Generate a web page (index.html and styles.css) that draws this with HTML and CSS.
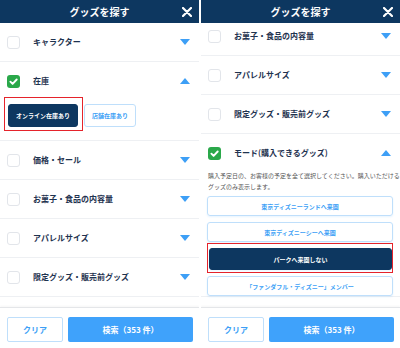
FILE: index.html
```html
<!DOCTYPE html>
<html lang="ja">
<head>
    <meta charset="UTF-8">
    <meta name="viewport" content="width=device-width, initial-scale=1.0">
    <title>グッズを探す</title>
    <link rel="stylesheet" href="styles.css">
</head>
<body>
    <div class="screens">
        <!-- 左：在庫を開いた状態 -->
        <section class="panel">
            <header class="bar">
                <h1>グッズを探す</h1>
                <span class="close"><svg width="10" height="10" viewBox="0 0 10 10"><path d="M1 1L9 9M9 1L1 9" stroke="#fff" stroke-width="2.2" stroke-linecap="round"/></svg></span>
            </header>
            <div class="body">
                <ul class="filters">
                    <li class="filter">
                        <div class="filter-head"><span class="check"></span><span class="label">キャラクター</span><span class="arrow down"></span></div>
                    </li>
                    <li class="filter">
                        <div class="filter-head"><span class="check on"><svg width="13" height="13" viewBox="0 0 13 13"><path d="M3.4 6.7L5.6 8.9L9.7 4.5" fill="none" stroke="#fff" stroke-width="1.9" stroke-linecap="round" stroke-linejoin="round"/></svg></span><span class="label">在庫</span><span class="arrow up"></span></div>
                        <div class="chips">
                            <span class="marked marked-chip"><span class="chip active">オンライン在庫あり</span></span>
                            <span class="chip">店舗在庫あり</span>
                        </div>
                    </li>
                    <li class="filter">
                        <div class="filter-head"><span class="check"></span><span class="label">価格・セール</span><span class="arrow down"></span></div>
                    </li>
                    <li class="filter">
                        <div class="filter-head"><span class="check"></span><span class="label">お菓子・食品の内容量</span><span class="arrow down"></span></div>
                    </li>
                    <li class="filter">
                        <div class="filter-head"><span class="check"></span><span class="label">アパレルサイズ</span><span class="arrow down"></span></div>
                    </li>
                    <li class="filter">
                        <div class="filter-head"><span class="check"></span><span class="label">限定グッズ・販売前グッズ</span><span class="arrow down"></span></div>
                    </li>
                </ul>
            </div>
            <footer class="actions">
                <button class="btn-clear">クリア</button>
                <button class="btn-search">検索（353 件）</button>
            </footer>
        </section>

        <!-- 右：モードを開いた状態（スクロール後） -->
        <section class="panel">
            <header class="bar">
                <h1>グッズを探す</h1>
                <span class="close"><svg width="10" height="10" viewBox="0 0 10 10"><path d="M1 1L9 9M9 1L1 9" stroke="#fff" stroke-width="2.2" stroke-linecap="round"/></svg></span>
            </header>
            <div class="body">
                <ul class="filters scrolled">
                    <li class="filter">
                        <div class="filter-head"><span class="check"></span><span class="label">お菓子・食品の内容量</span><span class="arrow down"></span></div>
                    </li>
                    <li class="filter">
                        <div class="filter-head"><span class="check"></span><span class="label">アパレルサイズ</span><span class="arrow down"></span></div>
                    </li>
                    <li class="filter">
                        <div class="filter-head"><span class="check"></span><span class="label">限定グッズ・販売前グッズ</span><span class="arrow down"></span></div>
                    </li>
                    <li class="filter open">
                        <div class="filter-head"><span class="check on"><svg width="13" height="13" viewBox="0 0 13 13"><path d="M3.4 6.7L5.6 8.9L9.7 4.5" fill="none" stroke="#fff" stroke-width="1.9" stroke-linecap="round" stroke-linejoin="round"/></svg></span><span class="label">モード(購入できるグッズ)</span><span class="arrow up"></span></div>
                        <p class="note">購入予定日の、お客様の予定を全て選択してください。購入いただける<br>グッズのみ表示します。</p>
                        <div class="options">
                            <span class="option">東京ディズニーランドへ来園</span>
                            <span class="option">東京ディズニーシーへ来園</span>
                            <span class="marked marked-option"><span class="option active">パークへ来園しない</span></span>
                            <span class="option">「ファンダフル・ディズニー」メンバー</span>
                        </div>
                    </li>
                </ul>
            </div>
            <footer class="actions">
                <button class="btn-clear">クリア</button>
                <button class="btn-search">検索（353 件）</button>
            </footer>
        </section>
    </div>
</body>
</html>
```

FILE: styles.css
```css
:root {
    --navy: #0d3760;
    --text: #1f3350;
    --blue: #3d9ff6;
    --blue-light: #bfdffb;
    --line: #eef0f3;
    --green: #2aa84a;
    --red: #e5232b;
}

* {
    box-sizing: border-box;
}

body {
    margin: 0;
    background: #fff;
    font-family: "Noto Sans CJK JP", "Noto Sans", sans-serif;
    color: var(--text);
}

.screens {
    display: flex;
    gap: 2px;
    width: 400px;
    height: 348px;
}

.panel {
    width: 199px;
    height: 348px;
    display: flex;
    flex-direction: column;
    overflow: hidden;
    background: #fff;
}

.bar {
    position: relative;
    z-index: 2;
    height: 23px;
    flex: none;
    background: var(--navy);
    display: flex;
    align-items: center;
    justify-content: center;
}

.bar h1 {
    margin: 0;
    color: #fff;
    font-size: 10px;
    font-weight: 700;
    line-height: 1;
}

.close {
    position: absolute;
    right: 7px;
    top: 7px;
    display: flex;
}

.body {
    flex: 1;
    overflow: hidden;
}

.filters {
    list-style: none;
    margin: 0;
    padding: 0;
}

.filters.scrolled {
    margin-top: -6px;
}

.filter {
    border-bottom: 1px solid var(--line);
}

.filter-head {
    height: 38px;
    display: flex;
    align-items: center;
    padding: 0 9px 0 7px;
}

.check {
    width: 13px;
    height: 13px;
    flex: none;
    border: 1px solid #e2e5ea;
    border-radius: 3px;
    display: flex;
}

.check.on {
    border: none;
    background: var(--green);
}

.label {
    flex: 1;
    margin-left: 13px;
    font-size: 8px;
    font-weight: 700;
    line-height: 1;
}

.arrow {
    width: 0;
    height: 0;
    border-left: 5px solid transparent;
    border-right: 5px solid transparent;
}

.arrow.down {
    border-top: 6px solid var(--blue);
}

.arrow.up {
    border-bottom: 6px solid var(--blue);
}

.chips {
    display: flex;
    gap: 6px;
    padding: 4px 8px 13px;
}

.chip {
    display: flex;
    align-items: center;
    height: 23px;
    padding: 0 7px;
    border: 1px solid var(--blue-light);
    border-radius: 3px;
    font-size: 6px;
    font-weight: 700;
    color: var(--blue);
    white-space: nowrap;
}

.chip.active {
    background: var(--navy);
    border-color: var(--navy);
    color: #fff;
}

/* 赤枠の注釈 */
.marked {
    position: relative;
    display: block;
}

.marked::after {
    content: "";
    position: absolute;
    border: 1.5px solid var(--red);
    pointer-events: none;
}

.marked-chip::after {
    top: -7px;
    left: -4px;
    right: -5px;
    bottom: -4px;
}

.marked-option::after {
    top: -5px;
    left: 0;
    right: 0;
    bottom: -3px;
}

.note {
    margin: -1px 0 0;
    padding: 0 7px;
    font-size: 6px;
    line-height: 10.5px;
    color: #555;
    white-space: nowrap;
}

.options {
    display: flex;
    flex-direction: column;
    gap: 6px;
    padding: 4px 7px 0 6px;
}

.option {
    display: flex;
    align-items: center;
    justify-content: center;
    height: 20px;
    border: 1px solid var(--blue-light);
    border-radius: 3px;
    font-size: 6px;
    font-weight: 700;
    color: var(--blue);
    box-shadow: 0 1px 2px rgba(61, 159, 246, 0.12);
}

.option.active {
    height: 22px;
    margin: 0 1px 0 2px;
    background: var(--navy);
    border-color: var(--navy);
    color: #fff;
}

.actions {
    flex: none;
    height: 41px;
    border-top: 1px solid #e4e6e9;
    box-shadow: 0 -1px 2px rgba(0, 0, 0, 0.04);
    display: flex;
    gap: 5px;
    padding: 9px 6px 6px 7px;
    background: #fff;
}

.actions button {
    height: 25px;
    font-family: inherit;
    font-size: 8px;
    font-weight: 700;
    border-radius: 2px;
    cursor: pointer;
}

.btn-clear {
    width: 56px;
    background: #fff;
    border: 1px solid var(--blue-light);
    color: var(--blue);
}

.btn-search {
    flex: 1;
    background: #3fa2fb;
    border: none;
    color: #fff;
}
```
